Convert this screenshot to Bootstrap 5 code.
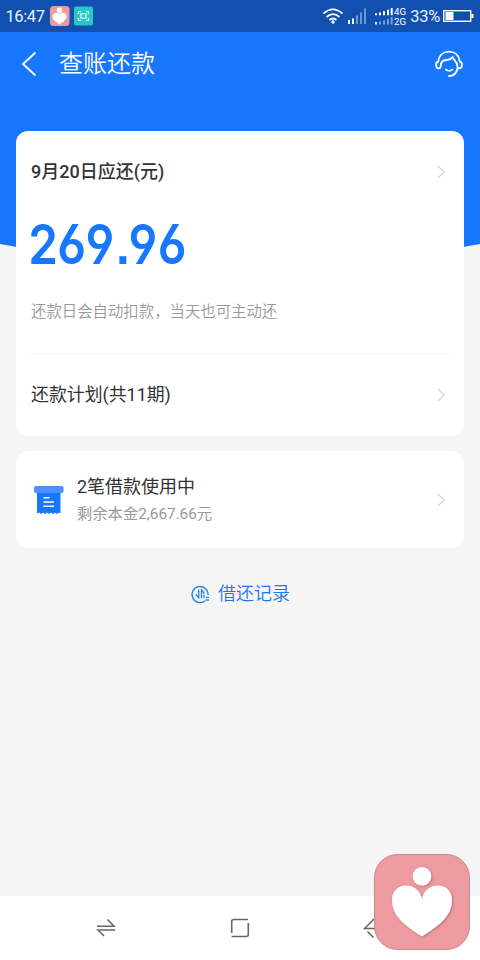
<!DOCTYPE html>
<html lang="zh-CN">
<head>
<meta charset="utf-8">
<meta name="viewport" content="width=device-width, initial-scale=1">
<title>查账还款</title>
<link href="https://cdn.jsdelivr.net/npm/bootstrap@5.3.0/dist/css/bootstrap.min.css" rel="stylesheet">
<style>
body{font-family:Roboto,"Noto Sans CJK SC",sans-serif;background:#f5f5f5;color:#333;height:960px;overflow:hidden;line-height:1}
svg{display:block;flex:none}
.status-bar{height:32px;background:#1150ae;color:#e8effb;padding:0 6px 0 5.5px;font-size:16.5px}
.clock{width:43.5px;letter-spacing:-.4px;padding-top:3px}
.battery-text{margin:0 3px 0 2px;letter-spacing:-.3px;padding-top:3px}
.hero{height:212px;background:#1777ff}
.title-bar{height:64px;padding:0 17px 0 21px;color:#fff}
.title-text{font-size:24px;font-weight:350;margin-left:22px;line-height:36px}
.arc{height:30px;width:100%;margin-bottom:-143px}
.panel{border:0;border-radius:12px;margin:0 16px;background:#fff;color:#333}
.panel-due{height:305px;padding:0 15px}
.row-due{height:82px;font-size:18px;font-weight:500;padding-right:4px}
.amount{height:62px}
.amount svg{overflow:visible}
.amount text{font-family:Inter,sans-serif;font-weight:600;font-size:55.5px;font-feature-settings:"cv03","cv04","ss01","ss07";fill:#1777ff}
.hint{font-size:15.4px;font-weight:350;color:#999;height:79px;padding-bottom:3px;border-bottom:1px solid #f3f3f3}
.row-plan{height:82px;font-size:17.900px;padding-right:4px}
.panel-loan{height:97px;margin-top:15px;padding:0 19px 0 17px}
.loan-text{margin-left:13px}
.loan-name{font-size:18px;line-height:25px}
.loan-rest{font-size:15.3px;line-height:23px;color:#999;margin-top:4px}
.record{margin-top:32px;font-size:18px;font-weight:350;line-height:28px;color:#1b78f2}
.nav-keys{height:64px;background:#fff;padding:0 97px 0 96px}
.float-app{right:10px;bottom:10px}
</style>
</head>
<body class="d-flex flex-column">
<div class="status-bar d-flex align-items-center flex-shrink-0">
  <span class="clock">16:47</span>
  <svg width="45" height="20" viewBox="0 0 45 20">
    <rect x="1" y="0" width="19.500" height="20" rx="3.500" fill="#e99ba2"/>
    <circle cx="10.500" cy="4.200" r="2.700" fill="#fff"/>
    <path d="M10.500 8C12 5.800 17.500 6 17.500 10.500c0 3-3.500 5.500-7 8-3.500-2.500-7-5-7-8C3.500 6 9 5.800 10.500 8z" fill="#fff"/>
    <rect x="25" y="0.500" width="19" height="19" rx="2" fill="#2bc5c4"/>
    <path d="M29.500 8V5.500H32M37 5.500h2.500V8M39.500 12v2.500H37M32 14.500h-2.500V12" fill="none" stroke="#dff" stroke-width="1.200"/>
    <rect x="32" y="7.700" width="5" height="4.500" fill="none" stroke="#dff" stroke-width="1.200"/>
  </svg>
  <svg class="ms-auto" width="86" height="24" viewBox="0 0 86 24">
    <g fill="none" stroke="#fff" stroke-width="1.700">
      <path d="M1.500 9.700Q11 1.200 20.500 9.700M4.500 13Q11 7.200 17.500 13M7.500 16Q11 13 14.500 16"/>
    </g>
    <circle cx="11" cy="18" r="1.700" fill="#fff"/>
    <path d="M26 16h2v4h-2zM30 14.500h2V20h-2z" fill="#fff"/>
    <path d="M34 11.500h2V20h-2zM38 8.500h2V20h-2zM42 4.500h2V20h-2z" fill="#6e96d2"/>
    <path d="M53 9.200h2v2h-2zM57 8.500h2v2.700h-2zM61 7.200h2v4h-2zM65 5.700h2v5.500h-2zM68.700 4h2v7.200h-2z" fill="#fff"/>
    <path d="M53 18h2v2.500h-2z" fill="#dce8fa"/>
    <path d="M57 17.500h2v3h-2zM61 16.500h2v4h-2zM65 15h2v5.500h-2zM68.700 13h2v7.500h-2z" fill="#7b9fd6"/>
    <text x="72" y="11" font-size="9.500" textLength="12" lengthAdjust="spacingAndGlyphs" fill="#fff">4G</text>
    <text x="72" y="20.500" font-size="9.500" textLength="12" lengthAdjust="spacingAndGlyphs" fill="#fff">2G</text>
  </svg>
  <span class="battery-text">33%</span>
  <svg width="31" height="14" viewBox="0 0 31 14"><rect x=".7" y="1.700" width="27" height="10.600" fill="none" stroke="#fff" stroke-width="1.400"/><rect x="2.500" y="3" width="8" height="8" fill="#fff"/><path d="M28.500 5h2v4h-2z" fill="#fff"/></svg>
</div>
<header class="hero flex-shrink-0">
  <div class="title-bar d-flex align-items-center">
    <svg width="16" height="26" viewBox="0 0 16 26"><path d="M14.500 1.500 2 13l12.500 11.500" fill="none" stroke="#fff" stroke-width="1.900"/></svg>
    <h1 class="title-text mb-0">查账还款</h1>
    <svg class="ms-auto" width="28" height="28" viewBox="0 0 28 28" fill="none" stroke="#fff" stroke-width="1.800" stroke-linejoin="round" stroke-linecap="round">
      <path d="M3.300 11.500C4 5.200 8.400 1.700 14 1.700s10 3.500 10.700 9.800M3.300 11.500c-1.900.3-2.200 1.300-2.200 3.200 0 2.400.7 3.600 2.700 3.600 1.500 0 1.900-.8 1.900-2.300 0-4.200 2-5.800 5.500-6 3-.2 5.100-1 6.300-3 .8 3 4.800 4.300 4.800 8.800 0 1.700.4 2.500 1.900 2.500 2 0 2.700-1.200 2.700-3.600 0-1.900-.3-2.900-2.200-3.200M22.600 18.300c-1 4.800-4 7.700-8.600 7.700M11 19.600c1.800 1.400 4.500 1.400 6.300 0"/>
    </svg>
  </div>
</header>
<svg class="arc" viewBox="0 0 480 30" preserveAspectRatio="none"><path d="M0 0Q240 46 480 0z" fill="#1777ff"/></svg>

<main class="flex-grow-1 position-relative">
  <section class="card panel panel-due">
    <div class="row-due d-flex align-items-center justify-content-between">
      <span>9月20日应还(元)</span>
      <svg width="8" height="14" viewBox="0 0 8 14"><path d="M1 1l6 6-6 6" fill="none" stroke="#d2d2d2" stroke-width="1.200"/></svg>
    </div>
    <div class="amount">
      <svg width="170" height="62"><text transform="scale(.86 1)" x="-3.200 30.500 63.500 98 113.500 147.300" y="51">269.96</text></svg>
    </div>
    <div class="hint d-flex align-items-center"><span>还款日会自动扣款，当天也可主动还</span></div>
    <div class="row-plan d-flex align-items-center justify-content-between">
      <span>还款计划(共11期)</span>
      <svg width="8" height="14" viewBox="0 0 8 14"><path d="M1 1l6 6-6 6" fill="none" stroke="#d2d2d2" stroke-width="1.200"/></svg>
    </div>
  </section>
  <section class="card panel panel-loan flex-row align-items-center">
    <svg width="31" height="30" viewBox="0 0 31 30">
      <path d="M4 3h23.500v25.500l-1.500-1-2 1.500-2-1.500-2 1.500-2-1.500-2 1.500-2-1.500-2 1.500-2-1.500-2 1.500-2-1.500-2 1z" fill="#1777ff"/>
      <rect x="1" y="1" width="29.500" height="7" rx="1.800" fill="#4a92ff"/>
      <path d="M10.500 12.800h6M10.500 17h10.500M10.500 21.300h10.500" stroke="#fff" stroke-width="1.500"/>
    </svg>
    <div class="loan-text">
      <div class="loan-name">2笔借款使用中</div>
      <div class="loan-rest">剩余本金2,667.66元</div>
    </div>
    <svg class="ms-auto" width="8" height="14" viewBox="0 0 8 14"><path d="M1 1l6 6-6 6" fill="none" stroke="#d2d2d2" stroke-width="1.200"/></svg>
  </section>
  <div class="record d-flex justify-content-center align-items-center">
    <svg class="me-2" width="20" height="20" viewBox="0 0 20 20" fill="none" stroke="#2880ef" stroke-width="1.300">
      <path d="M18 11A8 8 0 1 0 15 16.800"/><path d="M8.700 5.500V13.700L5.700 10.500M11.500 14.300V6l3 3.500M14 10.500v3.700M15.800 13.300h3.200M15.500 16h3.500"/>
    </svg>
    <span>借还记录</span>
  </div>
</main>
<footer class="nav-keys d-flex justify-content-between align-items-center flex-shrink-0">
  <svg width="20" height="20" viewBox="0 0 20 20"><path d="M1 8.200h17L11.500 1.500M19 12H2l6 6" fill="none" stroke="#666" stroke-width="1.500"/></svg>
  <svg width="20" height="20" viewBox="0 0 20 20"><path d="M1.700 15V3.500q0-2 2-2H18M18.300 5v11.500q0 2-2 2H1.500" fill="none" stroke="#666" stroke-width="1.600"/></svg>
  <svg width="20" height="20" viewBox="0 0 20 20"><path d="M11 1 1.500 10.500h13M4.500 13.500l6 6" fill="none" stroke="#666" stroke-width="1.500"/></svg>
</footer>
<svg class="float-app position-absolute" width="96" height="96" viewBox="0 0 96 96">
  <defs><filter id="soft" x="-20%" y="-20%" width="140%" height="140%"><feDropShadow dx="1" dy="1" stdDeviation="1" flood-color="#80454c" flood-opacity=".5"/></filter></defs>
  <rect x=".5" y=".5" width="95" height="95" rx="23" fill="#ed9aa0" stroke="#c98a8f" stroke-width="1"/>
  <g fill="#fff" filter="url(#soft)"><circle cx="48" cy="22.300" r="9.300"/><path d="M48 46C47 36 39 31.500 32 31.500 23 31.500 18 38.500 18 46c0 16 13 26 30 36.500C65 72 78 62 78 46c0-7.500-5-14.500-14-14.500C57 31.500 49 36 48 46z"/></g>
</svg>
<script src="https://cdn.jsdelivr.net/npm/bootstrap@5.3.0/dist/js/bootstrap.bundle.min.js"></script>
</body>
</html>
